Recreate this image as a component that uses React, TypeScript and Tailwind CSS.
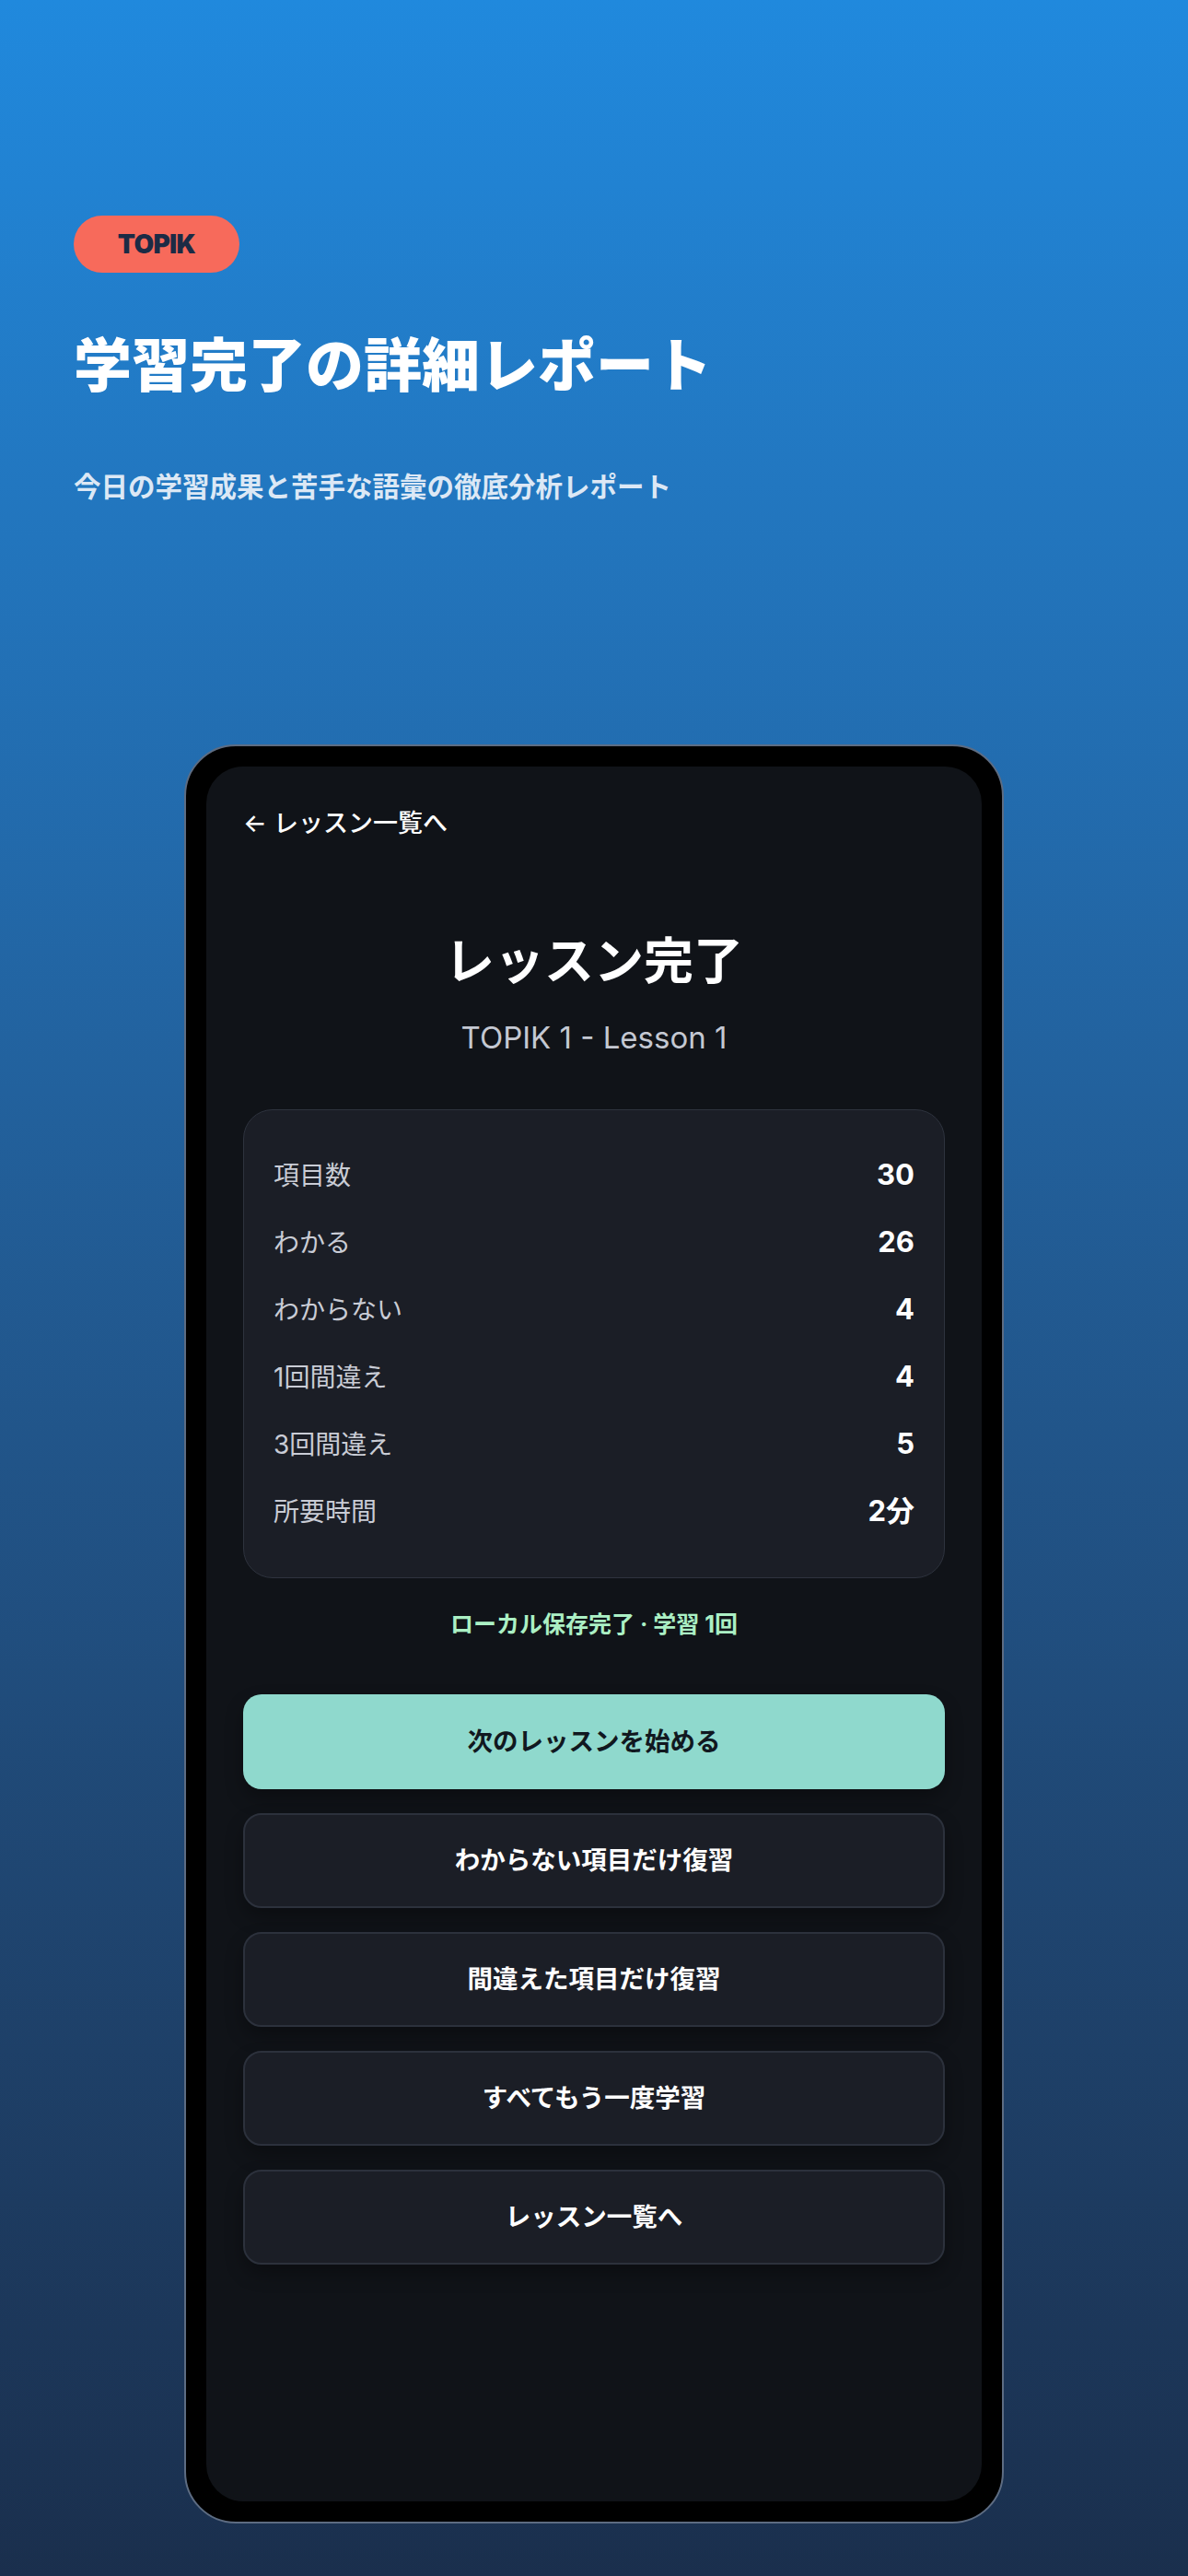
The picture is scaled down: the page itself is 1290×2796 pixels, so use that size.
import React from 'react';

const stats = [
  { label: '項目数', value: '30' },
  { label: 'わかる', value: '26' },
  { label: 'わからない', value: '4' },
  { label: '1回間違え', value: '4' },
  { label: '3回間違え', value: '5' },
  { label: '所要時間', value: '2分' },
];

const actions = ['わからない項目だけ復習', '間違えた項目だけ復習', 'すべてもう一度学習', 'レッスン一覧へ'];

function StatRow({ label, value }: { label: string; value: string }) {
  return (
    <div className="flex h-[73px] items-center justify-between">
      <span className="text-[28px] text-[#c9ccd5]">{label}</span>
      <span className="text-[31px] font-bold text-white">{value}</span>
    </div>
  );
}

export default function App() {
  return (
    <div className="min-h-[2796px] w-full bg-linear-to-b from-[#2089dd] to-[#1a2f4d] font-['Inter','Noto_Sans_CJK_JP',sans-serif]">
      {/* ヘッダー */}
      <div className="px-[80px] pt-[234px]">
        <div className="flex h-[62px] w-[180px] items-center justify-center rounded-full bg-[#f76a5b]">
          <span className="text-[28px] font-black tracking-tight text-[#1c2b45]">TOPIK</span>
        </div>
        <h1 className="mt-[63px] text-[63px] font-black leading-[74px] text-white">学習完了の詳細レポート</h1>
        <p className="mt-[75px] text-[29.5px] font-bold leading-[40px] text-[#dce8f5]">
          今日の学習成果と苦手な語彙の徹底分析レポート
        </p>
      </div>

      {/* 端末モック */}
      <div className="mx-auto mt-[260px] h-[1931px] w-[890px] rounded-[56px] border-2 border-[#5d6c82] bg-black p-[22px]">
        <div className="flex h-full flex-col rounded-[40px] bg-[#101318] px-[40px] pt-[44px]">
          <div className="text-[27px] font-medium leading-[36px] text-white">← レッスン一覧へ</div>

          <div className="mt-[100px] text-center">
            <h2 className="text-[54px] font-bold leading-[64px] text-white">レッスン完了</h2>
            <p className="mt-[30px] text-[33px] leading-[40px] text-[#c4c8d2]">TOPIK 1 - Lesson 1</p>
          </div>

          <div className="mt-[58px] rounded-[32px] border border-[#2e333e] bg-[#1b1e26] px-[32px] pb-[35px] pt-[34px]">
            {stats.map((s) => (
              <StatRow key={s.label} label={s.label} value={s.value} />
            ))}
          </div>

          <p className="mt-[32px] text-center text-[25px] font-bold leading-[36px] text-[#abf0c4]">
            ローカル保存完了 · 学習 1回
          </p>

          <div className="mt-[58px] flex flex-col gap-[26px]">
            <button className="flex h-[103px] items-center justify-center rounded-[20px] bg-[#8fd9cd] text-[27.5px] font-bold text-[#111820] shadow-[0_10px_20px_rgba(0,0,0,0.3)]">
              次のレッスンを始める
            </button>
            {actions.map((a) => (
              <button
                key={a}
                className="flex h-[103px] items-center justify-center rounded-[20px] border-2 border-[#2c313c] bg-[#1b1e26] text-[27.5px] font-bold text-white shadow-[0_10px_20px_rgba(0,0,0,0.3)]"
              >
                {a}
              </button>
            ))}
          </div>
        </div>
      </div>
    </div>
  );
}
